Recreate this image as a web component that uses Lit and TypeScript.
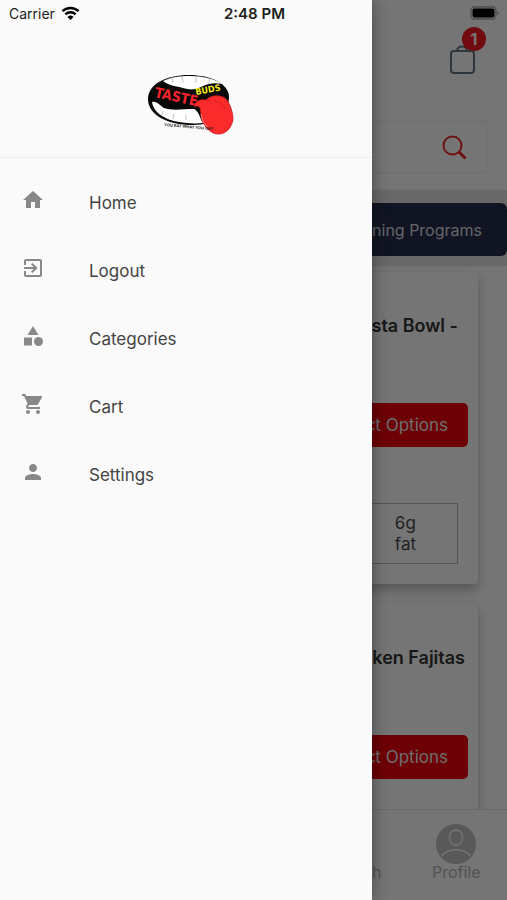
import { LitElement, html, css, svg } from "lit";
import { customElement } from "lit/decorators.js";

const icons = {
  home: svg`<path d="M10 20v-6h4v6h5v-8h3L12 3 2 12h3v8z"/>`,
  logout: svg`<path d="M10.09 15.59 11.5 17l5-5-5-5-1.41 1.41L12.67 11H3v2h9.67zM19 3H5a2 2 0 0 0-2 2v4h2V5h14v14H5v-4H3v4a2 2 0 0 0 2 2h14a2 2 0 0 0 2-2V5a2 2 0 0 0-2-2z"/>`,
  categories: svg`<path d="m12 2-5.5 9h11z"/><circle cx="17.5" cy="17.5" r="4.5"/><path d="M3 13.5h8v8H3z"/>`,
  cart: svg`<path d="M7 18c-1.100 0-1.990.900-1.990 2S5.900 22 7 22s2-.900 2-2-.900-2-2-2zM1 2v2h2l3.600 7.590-1.350 2.450c-.160.280-.250.610-.250.960 0 1.100.900 2 2 2h12v-2H7.420c-.140 0-.250-.110-.250-.250l.030-.120.900-1.630h7.450c.750 0 1.410-.410 1.750-1.030l3.580-6.490A1 1 0 0 0 20 4H5.210l-.940-2zm16 16c-1.100 0-1.990.900-1.990 2s.890 2 1.990 2 2-.900 2-2-.900-2-2-2z"/>`,
  person: svg`<path d="M12 12c2.210 0 4-1.790 4-4s-1.790-4-4-4-4 1.790-4 4 1.790 4 4 4zm0 2c-2.670 0-8 1.340-8 4v2h16v-2c0-2.660-5.330-4-8-4z"/>`,
};

const menu = [
  { label: "Home", icon: icons.home },
  { label: "Logout", icon: icons.logout },
  { label: "Categories", icon: icons.categories },
  { label: "Cart", icon: icons.cart },
  { label: "Settings", icon: icons.person },
];

@customElement("status-bar")
class StatusBar extends LitElement {
  static styles = css`
    :host {
      display: grid;
      grid-template-columns: 1fr auto 1fr;
      align-items: center;
      height: 28px;
      padding: 0 7px 0 9px;
      box-sizing: border-box;
      font: 14px/20px Inter, sans-serif;
      color: #1c1c1c;
    }
    .carrier { display: flex; align-items: center; gap: 6px; }
    .time { font-size: 15px; font-weight: 600; }
    .battery { justify-self: end; }
    svg { display: block; margin-bottom: 2px; }
  `;
  render() {
    return html`
      <span class="carrier">Carrier
        <svg width="19" height="14" viewBox="0 0 18 14" fill="none" stroke="#000" stroke-width="2.4" aria-hidden="true">
          <path d="M1 5.200a11.500 11.500 0 0 1 16 0"/>
          <path d="M3.900 8.400a7.300 7.300 0 0 1 10.200 0"/>
          <path d="M9 14 6 10.900a4.400 4.400 0 0 1 6 0z" fill="#000" stroke="none"/>
        </svg>
      </span>
      <span class="time">2:48 PM</span>
      <svg class="battery" width="30" height="14" viewBox="0 0 30 14" aria-hidden="true">
        <rect x="1" y="1" width="25" height="12" rx="3.500" fill="none" stroke="#4c4c4c" stroke-width="1.300"/>
        <rect x="2.500" y="2.500" width="22" height="9" rx="2" fill="#000"/>
        <path d="M27.500 5v4.200c1.800-.7 1.800-3.500 0-4.200z" fill="#4c4c4c"/>
      </svg>
    `;
  }
}

@customElement("brand-logo")
class BrandLogo extends LitElement {
  static styles = css`
    :host { display: block; }
    svg { display: block; }
    .name { font: 700 14px "DejaVu Sans Condensed", "DejaVu Sans", sans-serif; }
    .buds { font: 700 9px "DejaVu Sans Condensed", "DejaVu Sans", sans-serif; }
    .motto { font: 800 4px "Liberation Sans", sans-serif; }
  `;
  render() {
    return html`
      <svg width="88" height="64" viewBox="6 8 88 64" role="img" aria-label="Taste Buds">
        <path d="M8 34C8 19 26 10 49 10c22 0 40 9 40 22 0 17-14 28-36 28C27 60 8 50 8 34z" fill="#080808"/>
        <path d="M23 16c8-4 17-5 27-5 13 0 25 3 32 8-8-2-15 0-21 3-5 3-12 3-18 1-7-2-13-2-20-7z" fill="#fff"/>
        <path d="M12 37c5-1 7 3 12 6 8 3 19 1 30 1 5 2 6 10 9 14-9 1-20 0-29-2-12-3-21-10-22-19z" fill="#fff"/>
        <path d="M32 12l1 6M42 11l1 7M56 12v6M70 14l-2 5M23 46l-1 4M34 49l-1 5M46 50v5" stroke="#aaa" stroke-width=".7"/>
        <text class="name" x="14" y="32" fill="#f6232d" transform="rotate(12 14 32)">TASTE</text>
        <text class="buds" x="56" y="30" fill="#f4ed18" transform="rotate(-10 56 30)">BUDS</text>
        <path d="M55 42c-1-6 5-8 11-7 4-5 15-6 20-1 4 4 7 14 7 20-1 8-6 14-13 15-8 1-15-6-18-14-1-4-1-8-2-12-1-2-3-3-5-1z" fill="#fb2b2c" stroke="#c3161c" stroke-width=".8"/>
        <path d="M74 36c6 1 10 4 11 9M66 35c4 0 6 2 7 5" fill="none" stroke="#d31b20" stroke-width=".7"/>
        <path d="M61 49c1 7 4 11 8 14" fill="none" stroke="#ff8d8d" stroke-width=".9"/>
        <text class="motto" x="24" y="61" fill="#111" transform="rotate(5 24 61)">YOU EAT WHAT YOU GET</text>
      </svg>
    `;
  }
}

@customElement("store-page")
class StorePage extends LitElement {
  static styles = css`
    :host {
      display: flex;
      flex-direction: column;
      height: 100%;
      overflow: hidden;
      background: #fff;
      font: 17px/24px Inter, sans-serif;
      color: #4a4a4a;
    }
    button, input { font: inherit; border: 0; padding: 0; }
    svg { display: block; }
    .header {
      flex: none;
      display: flex;
      flex-direction: column;
      align-items: flex-end;
      gap: 48px;
      padding: 45px 20px 18px;
    }
    .bag { position: relative; margin-right: 12px; background: none; }
    .badge {
      position: absolute;
      left: 12px;
      bottom: 23px;
      width: 24px;
      height: 24px;
      border-radius: 50%;
      background: #f61923;
      color: #fff;
      font: 700 16px/24px Inter, sans-serif;
      text-align: center;
    }
    .search {
      display: flex;
      align-items: center;
      align-self: stretch;
      height: 50px;
      padding-right: 20px;
      box-sizing: border-box;
      box-shadow: 0 0 3px #0002;
    }
    .search input { flex: 1; min-width: 0; background: none; }
    .search button { background: none; }
    .strip {
      flex: none;
      display: flex;
      padding: 13px 0 10px 12px;
      background: #e3e3e3;
      box-shadow: 0 0 2px #0002;
    }
    .program {
      flex: 1;
      height: 53px;
      padding-right: 25px;
      border-radius: 6px;
      background: #262e4e;
      color: #dcdce0;
      font-size: 16px;
      text-align: right;
    }
    .list {
      flex: 1;
      min-height: 0;
      overflow: hidden;
      display: flex;
      flex-direction: column;
      gap: 20px;
      padding: 6px 29px 0;
    }
    .card {
      flex: none;
      display: flex;
      flex-direction: column;
      align-items: flex-end;
      height: 312px;
      padding: 42px 10px 20px;
      box-sizing: border-box;
      border-radius: 4px;
      background: #fff;
      box-shadow: 0 6px 12px #0004;
    }
    .title { margin: 0 10px 65px; font: 600 18px/24px Inter, sans-serif; color: #333; }
    .title.full { margin-right: 3px; }
    .select {
      height: 44px;
      padding: 0 20px;
      border-radius: 5px;
      background: #ed000d;
      color: #eee;
    }
    .macros {
      display: flex;
      justify-content: flex-end;
      width: 240px;
      height: 61px;
      margin: auto 10px 0;
      padding-right: 41px;
      box-sizing: border-box;
      align-items: center;
      border: 1px solid #b8b8b8;
      line-height: 21px;
    }
    .tabs {
      flex: none;
      display: grid;
      grid-template-columns: repeat(5, 1fr);
      height: 91px;
      box-sizing: border-box;
      border-top: 1px solid #e6e6e6;
      font-size: 16px;
      line-height: 20px;
    }
    .tab {
      grid-column: 4;
      display: flex;
      flex-direction: column;
      align-items: center;
      padding-top: 14px;
      color: #b4b4b4;
      text-decoration: none;
    }
    .tab.profile { grid-column: 5; }
    .tab svg { margin-bottom: -2px; }
  `;
  card(title: string, full: boolean, macros: boolean) {
    return html`
      <article class="card">
        <h2 class=${full ? "title full" : "title"}>${title}</h2>
        <button class="select">Select Options</button>
        ${macros ? html`<div class="macros"><span>6g<br>fat</span></div>` : ""}
      </article>
    `;
  }
  render() {
    return html`
      <header class="header">
        <button class="bag" aria-label="Shopping bag">
          <svg width="25" height="29" viewBox="0 0 25 29" fill="none" stroke="#647683" stroke-width="2">
            <rect x="1" y="6" width="23" height="22" rx="3"/>
            <path d="M7 6c0-6 10-6 10 0"/>
          </svg>
          <span class="badge">1</span>
        </button>
        <div class="search">
          <input type="search" aria-label="Search meals">
          <button aria-label="Search">
            <svg width="25" height="25" viewBox="0 0 25 25" fill="none" stroke="#f0242b">
              <circle cx="10.500" cy="10.500" r="9" stroke-width="2"/>
              <path d="m17 17 6.500 6.500" stroke-width="2.800"/>
            </svg>
          </button>
        </div>
      </header>
      <div class="strip"><button class="program">Planning Programs</button></div>
      <main class="list">
        ${this.card("Pasta Bowl -", false, true)}
        ${this.card("Chicken Fajitas", true, false)}
      </main>
      <nav class="tabs">
        <a class="tab" href="#search">
          <svg width="40" height="40" viewBox="0 0 40 40" fill="none" stroke="#ababab" stroke-width="2" aria-hidden="true">
            <circle cx="18" cy="18" r="11"/><path d="m26 26 8 8"/>
          </svg>
          Search
        </a>
        <a class="tab profile" href="#profile">
          <svg width="40" height="40" viewBox="0 0 40 40" aria-hidden="true">
            <circle cx="20" cy="20" r="20" fill="#c0c0c0"/>
            <rect x="13.500" y="6" width="13" height="15" rx="6.500" fill="#c0c0c0" stroke="#f4f4f4" stroke-width="1.800"/>
            <path d="M5.500 32C13 23.500 27 23.500 34.500 32" fill="none" stroke="#f4f4f4" stroke-width="1.800"/>
          </svg>
          Profile
        </a>
      </nav>
    `;
  }
}

@customElement("nav-drawer")
class NavDrawer extends LitElement {
  static styles = css`
    :host {
      display: block;
      background: #fafafa;
      box-shadow: 0 0 16px #0006;
      font: 17px/24px Inter, sans-serif;
      color: #444;
    }
    .brand {
      display: flex;
      justify-content: center;
      padding: 73px 0 20px 8px;
      border-bottom: 1px solid #eee;
    }
    .menu { list-style: none; margin: 0; padding: 11px 0; }
    .item {
      display: flex;
      align-items: center;
      gap: 44px;
      height: 68px;
      padding-left: 21px;
      color: inherit;
      text-decoration: none;
    }
    .icon { display: block; fill: #888; margin-bottom: 6px; }
  `;
  render() {
    return html`
      <div class="brand"><brand-logo></brand-logo></div>
      <ul class="menu">
        ${menu.map((m) => html`
          <li><a class="item" href="#${m.label.toLowerCase()}">
            <svg class="icon" width="24" height="24" viewBox="0 0 24 24" aria-hidden="true">${m.icon}</svg>
            ${m.label}
          </a></li>`)}
      </ul>
    `;
  }
}

@customElement("app-root")
class AppRoot extends LitElement {
  static styles = css`
    :host { display: block; position: relative; height: 100vh; overflow: hidden; }
    .scrim { position: absolute; inset: 0; background: rgba(0, 0, 0, 0.54); }
    .drawer { position: absolute; inset: 0 auto 0 0; width: 372px; max-width: 85%; }
    .status { position: absolute; inset: 0 0 auto; }
  `;
  render() {
    return html`
      <store-page></store-page>
      <div class="scrim"></div>
      <nav-drawer class="drawer"></nav-drawer>
      <status-bar class="status"></status-bar>
    `;
  }
}
